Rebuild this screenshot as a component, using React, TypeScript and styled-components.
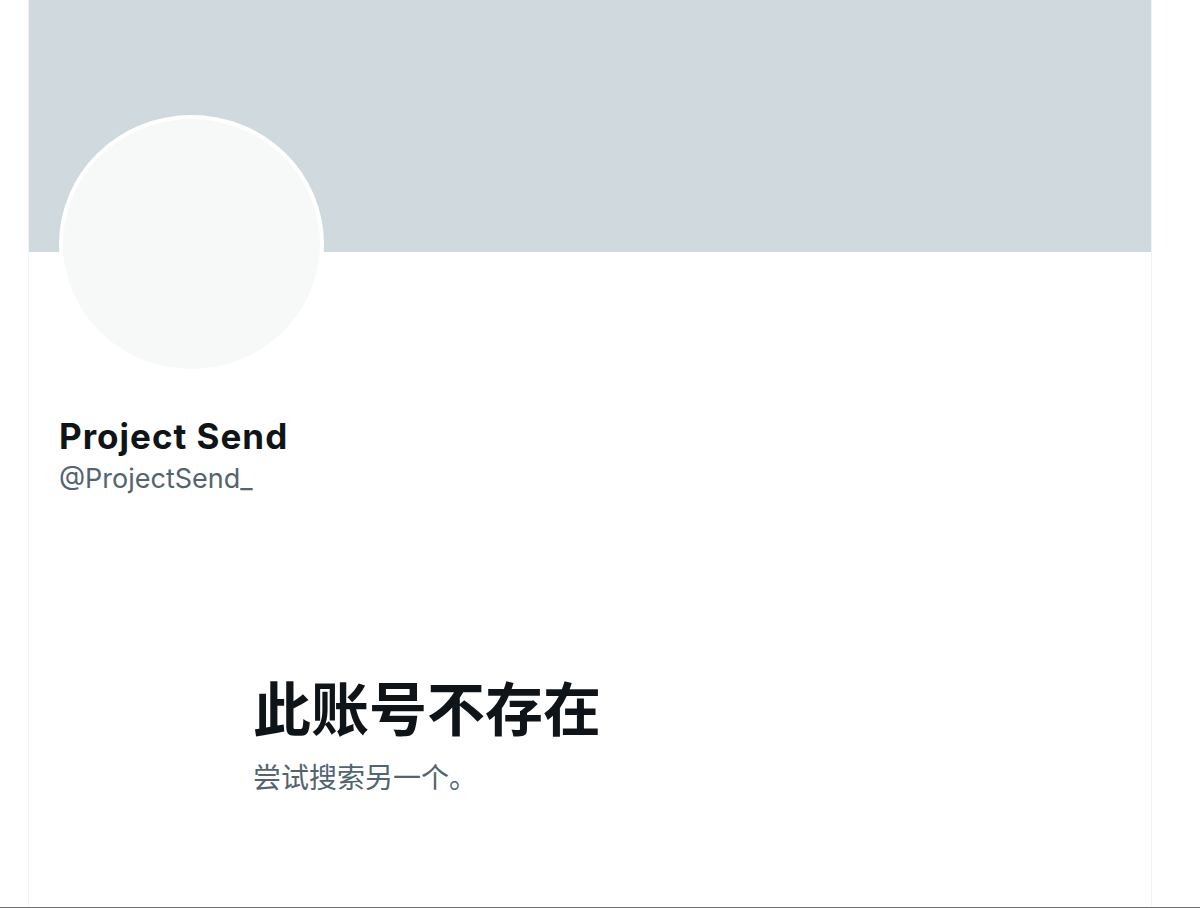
import styled, { createGlobalStyle } from "styled-components";

const GlobalStyle = createGlobalStyle`
  html, body {
    margin: 0;
    padding: 0;
    background: #ffffff;
  }
  body {
    font-family: Inter, "Noto Sans", "Noto Sans CJK SC", sans-serif;
    color: #0f1419;
  }
`;

function App() {
  return (
    <>
      <GlobalStyle />
      <Page>
        <Column>
          <Banner />
          <ProfileHeader>
            <Avatar />
            <Name>Project Send</Name>
            <Handle>@ProjectSend_</Handle>
          </ProfileHeader>
          <EmptyState>
            <EmptyTitle>此账号不存在</EmptyTitle>
            <EmptyText>尝试搜索另一个。</EmptyText>
          </EmptyState>
        </Column>
      </Page>
    </>
  );
}
export default App;

const Page = styled.div`
  height: 908px;
  box-sizing: border-box;
  border-bottom: 1px solid #6f6f6f;
  overflow: hidden;
`;

const Column = styled.main`
  margin-left: 28px;
  width: 1124px;
  height: 100%;
  box-sizing: border-box;
  border-left: 1px solid #eff3f4;
  border-right: 1px solid #eff3f4;
  display: flex;
  flex-direction: column;
`;

const Banner = styled.div`
  height: 252px;
  background: #cfd9de;
`;

const ProfileHeader = styled.section`
  padding: 0 30px;
  display: flex;
  flex-direction: column;
  align-items: flex-start;
`;

const Avatar = styled.div`
  margin-top: -137px;
  width: 265px;
  height: 258px;
  box-sizing: border-box;
  border-radius: 50%;
  border: 4px solid #ffffff;
  background: #f7f9f9;
`;

const Name = styled.h1`
  margin: 42px 0 0;
  font-size: 35px;
  line-height: 42px;
  letter-spacing: 1px;
  font-weight: 700;
  color: #0f1419;
`;

const Handle = styled.div`
  margin-top: 6px;
  font-size: 27px;
  line-height: 32px;
  color: #536471;
`;

const EmptyState = styled.section`
  margin-top: 177px;
  padding-left: 224px;
  font-family: "Noto Sans CJK SC", sans-serif;
`;

const EmptyTitle = styled.h2`
  margin: 0;
  font-size: 58px;
  line-height: 68px;
  font-weight: 700;
  color: #0f1419;
`;

const EmptyText = styled.p`
  margin: 19px 0 0;
  font-size: 28px;
  line-height: 34px;
  color: #536471;
`;
